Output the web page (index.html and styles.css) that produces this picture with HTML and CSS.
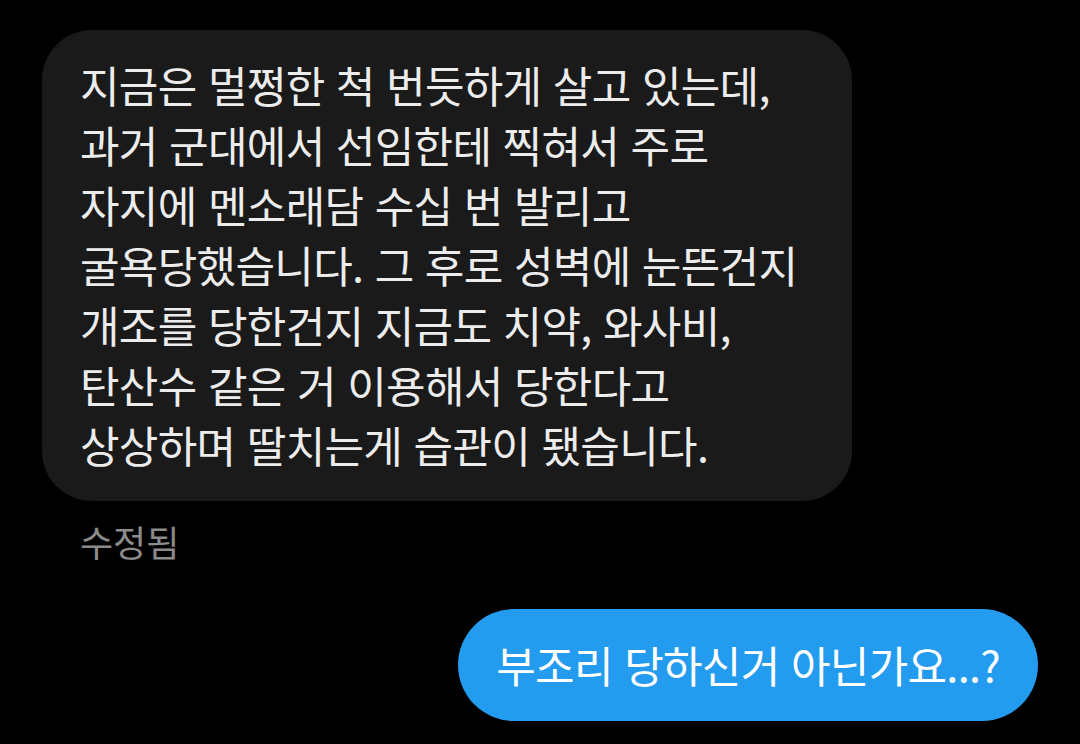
FILE: index.html
```html
<!DOCTYPE html>
<html lang="ko">

<head>
    <meta charset="UTF-8">
    <meta name="viewport" content="width=device-width, initial-scale=1.0">
    <title>채팅</title>
    <link rel="stylesheet" href="styles.css">
</head>

<body>
    <div class="chat">
        <div class="msg msg-in">
            지금은 멀쩡한 척 번듯하게 살고 있는데,<br>
            과거 군대에서 선임한테 찍혀서 주로<br>
            자지에 멘소래담 수십 번 발리고<br>
            굴욕당했습니다. 그 후로 성벽에 눈뜬건지<br>
            개조를 당한건지 지금도 치약, 와사비,<br>
            탄산수 같은 거 이용해서 당한다고<br>
            상상하며 딸치는게 습관이 됐습니다.
        </div>
        <div class="msg-meta">수정됨</div>
        <div class="msg msg-out">부조리 당하신거 아닌가요...?</div>
    </div>
</body>

</html>
```

FILE: styles.css
```css
html, body {
  margin: 0;
  background-color: #000;
}
.chat {
  display: flex;
  flex-direction: column;
  padding: 30px 42px;
  font-family: "Noto Sans CJK KR", "Noto Sans", sans-serif;
}
.msg {
  font-size: 43px;
  letter-spacing: -0.7px;
  white-space: nowrap;
}
.msg-in {
  align-self: flex-start;
  box-sizing: border-box;
  width: 810px;
  padding: 24px 38px 27px;
  line-height: 60px;
  border-radius: 50px;
  background-color: #1a1a1a;
  color: #ececec;
}
.msg-meta {
  margin: 18px 0 0 38px;
  font-size: 36px;
  line-height: 44px;
  color: #8b8b8b;
}
.msg-out {
  align-self: flex-end;
  margin-top: 46px;
  padding: 0 38px;
  height: 112px;
  line-height: 110px;
  border-radius: 56px;
  background-color: #239cf0;
  color: #fff;
}
```
